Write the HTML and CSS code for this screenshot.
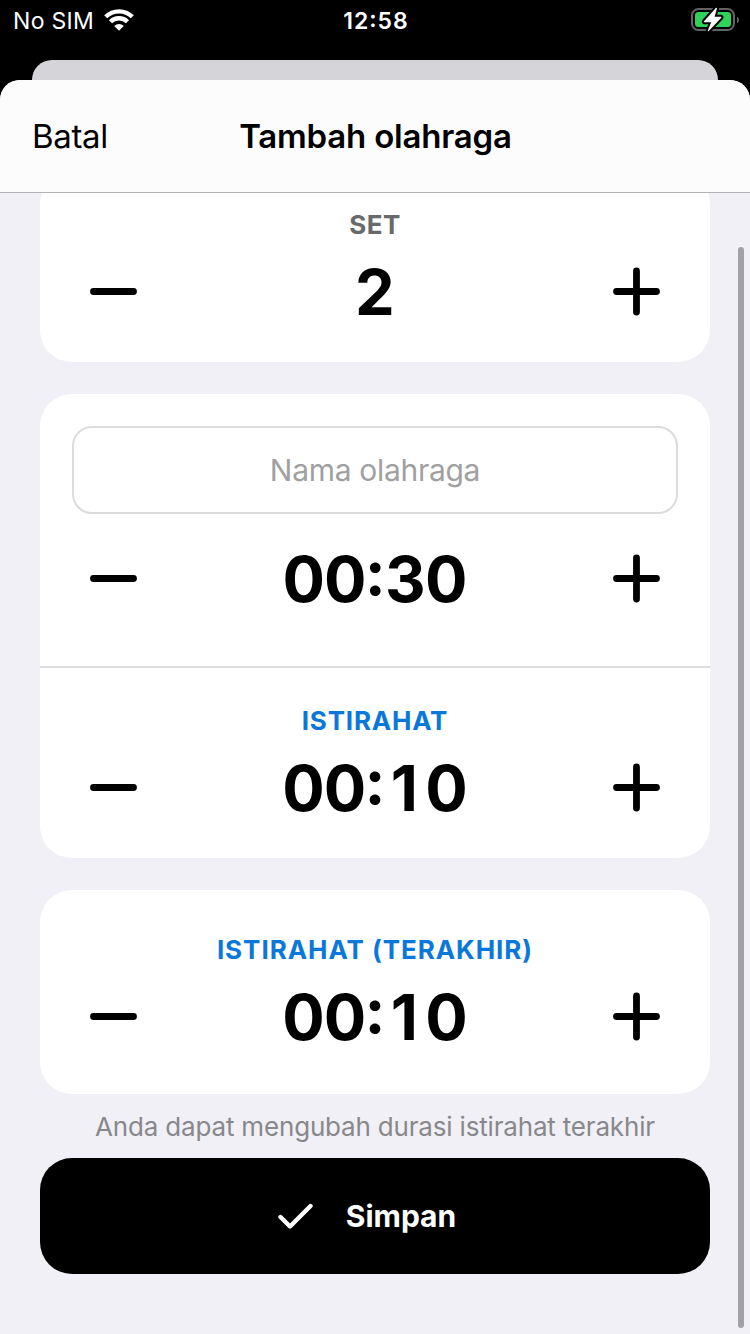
FILE: index.html
```html
<!DOCTYPE html>
<html lang="id">
<head>
<meta charset="utf-8">
<title>Tambah olahraga</title>
<link rel="stylesheet" href="styles.css">
</head>
<body>
<svg width="0" height="0" class="defs">
  <symbol id="minus" viewBox="0 0 48 49"><path d="M3.500 24.500h40" fill="none" stroke="#000" stroke-width="6.800" stroke-linecap="round"/></symbol>
  <symbol id="plus" viewBox="0 0 48 49"><path d="M3.500 24.500h40M23.500 4v41" fill="none" stroke="#000" stroke-width="6.800" stroke-linecap="round"/></symbol>
</svg>
<div class="screen">
  <header class="status">
    <div class="carrier"><span class="t sim">No SIM</span>
      <svg class="wifi" width="30" height="22" viewBox="0 0 30 22" fill="none" stroke="#fff" stroke-width="4.400"><path d="M1.700 7.800a19 19 0 0 1 26.600 0M6.500 12.800a12 12 0 0 1 17 0"/><path d="M15 21.800l-4.800-4.900a6.800 6.800 0 0 1 9.600 0z" fill="#fff" stroke="none"/></svg>
    </div>
    <span class="t clock">12<span class="clock-colon">:</span>58</span>
    <svg class="battery" width="48" height="28" viewBox="0 0 48 28"><rect x="1" y="3" width="42" height="21" rx="6.500" fill="none" stroke="#636366" stroke-width="2"/><rect x="4" y="6" width="36" height="15" rx="3.500" fill="#30d158"/><path d="M46 10.500v7q2-1 2-3.500t-2-3.500z" fill="#636366"/><path d="M24.800 2L13 15.300q-.6 1 .6 1h6.600l-3.400 8.200q-.2 1.500 1 .5l12.500-13.300q.6-1-.6-1h-6.100l2.400-8.200q.1-1.300-1.200-.5z" fill="#fff" stroke="#000" stroke-width="4" paint-order="stroke"/></svg>
  </header>
  <div class="behind"></div>
  <main class="sheet">
    <nav class="nav"><span class="t cancel">Batal</span><h1 class="t title">Tambah olahraga</h1></nav>
    <div class="content">
      <section class="card set">
        <h2 class="t label gray">SET</h2>
        <div class="stepper"><svg class="step"><use href="#minus"/></svg><span class="t value">2</span><svg class="step"><use href="#plus"/></svg></div>
      </section>
      <section class="card exercise">
        <div class="field"><span class="t placeholder">Nama olahraga</span></div>
        <div class="stepper work"><svg class="step"><use href="#minus"/></svg><span class="t value">00<span class="colon">:</span>30</span><svg class="step"><use href="#plus"/></svg></div>
        <div class="rest"><h2 class="t label">ISTIRAHAT</h2>
        <div class="stepper"><svg class="step"><use href="#minus"/></svg><span class="t value">00<span class="colon">:</span><span class="one">1</span>0</span><svg class="step"><use href="#plus"/></svg></div></div>
      </section>
      <section class="card last">
        <h2 class="t label">ISTIRAHAT (TERAKHIR)</h2>
        <div class="stepper"><svg class="step"><use href="#minus"/></svg><span class="t value">00<span class="colon">:</span><span class="one">1</span>0</span><svg class="step"><use href="#plus"/></svg></div>
      </section>
      <p class="hint"><span class="t hinttext">Anda dapat mengubah durasi istirahat terakhir</span></p>
      <div class="save"><svg width="36" height="28" viewBox="0 0 36 28" fill="none" stroke="#fff" stroke-width="4.400" stroke-linecap="round" stroke-linejoin="round"><path d="M2.500 15l9.500 9.500L32.500 4"/></svg><span class="t savetext">Simpan</span></div>
    </div>
    <div class="scrollbar"></div>
  </main>
</div>
</body>
</html>
```
FILE: styles.css
```css
* { box-sizing: border-box; }
body { margin: 0; background: #000; font-family: Inter, "Liberation Sans", sans-serif; color: #000; }
h1, h2, p { margin: 0; }
.defs { display: none; }
.t { white-space: nowrap; }
.screen { width: 750px; height: 1334px; overflow: hidden; display: flex; flex-direction: column; background: #000; }
.status { height: 60px; flex: none; display: grid; grid-template-columns: 1fr auto 1fr; padding: 1px 11px 19px 13px; align-items: center; color: #fff; }
.carrier { display: flex; align-items: center; gap: 10px; }
.sim { font-size: 23px; letter-spacing: .3px; }
.clock { font-size: 23px; font-weight: 600; letter-spacing: 1px; }
.clock-colon { line-height: 0; vertical-align: 2px; }
.wifi { margin-top: -2px; }
.battery { justify-self: end; margin-top: -2px; }
.behind { height: 40px; flex: none; margin: 0 32px -20px; border-radius: 20px 20px 0 0; background: #d5d4d9; }
.sheet { position: relative; height: 1254px; flex: none; border-radius: 20px 20px 0 0; background: #f1f0f6; overflow: hidden; }
.nav { position: relative; z-index: 1; height: 113px; display: grid; grid-template-columns: 1fr auto 1fr; align-items: center; padding: 0 32px; background: #fcfcfd; border-bottom: 1px solid #b2b2b5; }
.cancel { font-size: 33px; letter-spacing: -.35px; }
.title { font-size: 33px; font-weight: 600; letter-spacing: -.2px; padding-left: 1px; }
.content { padding: 0 40px; display: flex; flex-direction: column; }
.card { border-radius: 32px; background: #fff; }
.set { margin-top: -21px; height: 190px; padding-top: 37px; }
.exercise { margin-top: 32px; height: 464px; padding-top: 32px; }
.last { margin-top: 32px; height: 204px; padding-top: 44px; }
.label { font-size: 26px; line-height: 32px; font-weight: 700; letter-spacing: .8px; text-align: center; color: #0a78db; }
.last .label { letter-spacing: .95px; }
.label.gray { color: #69696b; letter-spacing: .5px; }
.stepper { height: 102px; display: grid; grid-template-columns: 48px 1fr 48px; align-items: center; padding: 0 49px 0 50px; }
.value { font-size: 63px; line-height: 64px; font-weight: 700; text-align: center; letter-spacing: -.8px; padding-right: 2px; }
.colon { line-height: 0; vertical-align: 7px; margin: 0 0 0 -1px; }
.one { margin: 0 8px 0 6px; }
.step { width: 48px; height: 49px; margin-top: -1px; }
.field { height: 88px; margin: 0 32px; border: 2px solid #dcdcdd; border-radius: 20px; display: flex; align-items: center; justify-content: center; }
.placeholder { color: #a0a0a1; font-size: 30px; letter-spacing: -.3px; }
.work { height: 130px; }
.rest { margin-top: 22px; border-top: 2px solid #dcdcdd; padding-top: 37px; }
.hint { height: 64px; display: flex; align-items: center; justify-content: center; color: #88888c; font-size: 26px; letter-spacing: -.18px; }
.save { height: 116px; border-radius: 32px; background: #000; color: #fff; display: flex; align-items: center; justify-content: center; gap: 32px; padding-right: 16px; font-size: 30px; font-weight: 700; }
.scrollbar { position: absolute; right: 6px; top: 167px; width: 6px; height: 1081px; border-radius: 3px; background: #a2a1a6; }
```
